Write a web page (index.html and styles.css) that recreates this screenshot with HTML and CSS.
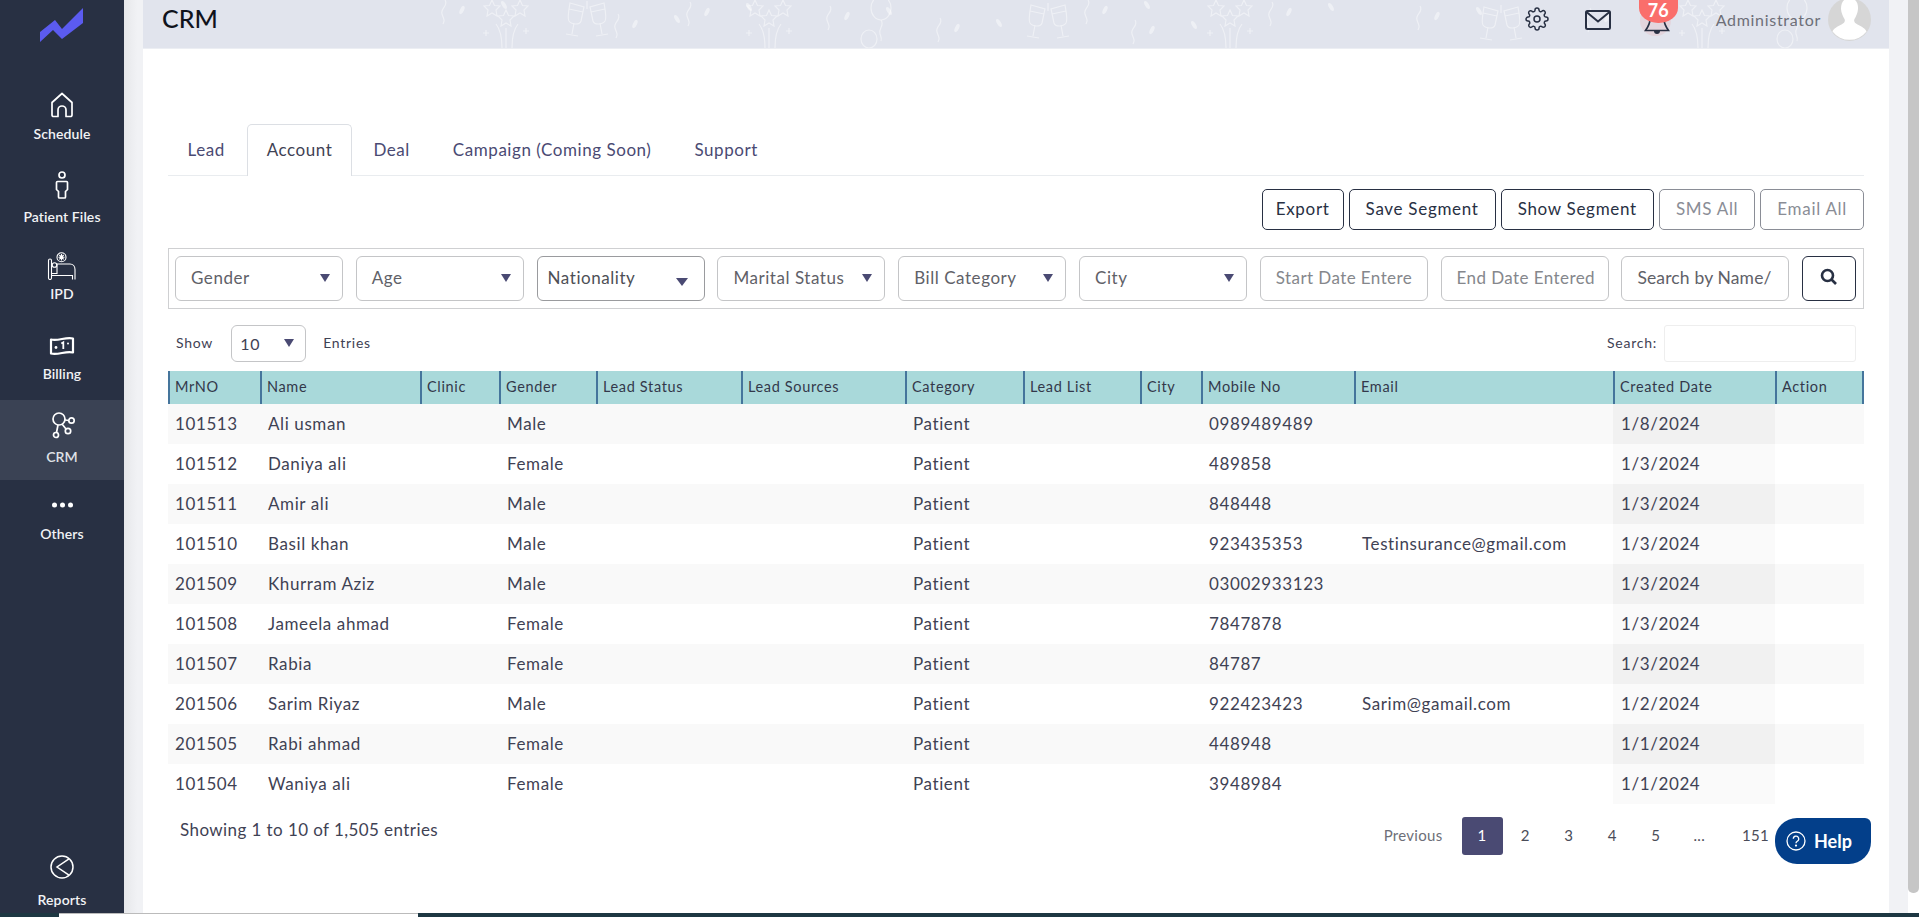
FILE: index.html
```html
<!DOCTYPE html>
<html lang="en">
<head>
<meta charset="utf-8">
<title>CRM</title>
<link rel="stylesheet" href="styles.css">
</head>
<body>
<div class="app">
  <aside class="sidebar">
    <div class="logo">
      <svg width="44" height="36" viewBox="0 0 44 36"><path d="M0 24 15 12 22 21 43 0V15L22 31 13 22 0 34Z" fill="#5b5bf0"/></svg>
    </div>
    <a class="nav"><svg class="ico" viewBox="0 0 30 30" width="30" height="30"><path d="M5 12.500 15 3.500l10 9V25a1.500 1.500 0 0 1-1.500 1.500H19V20a4 4 0 0 0-8 0v6.500H6.500A1.500 1.500 0 0 1 5 25Z" fill="none" stroke="#fff" stroke-width="1.700" stroke-linejoin="round"/></svg><span>Schedule</span></a>
    <a class="nav nav-low"><svg class="ico" viewBox="0 0 30 30" width="30" height="30"><circle cx="15" cy="5" r="3" fill="none" stroke="#fff" stroke-width="1.700"/><path d="M10.500 11.500h9a1 1 0 0 1 1 1v7l-2 2v5.500a1 1 0 0 1-1 1h-5a1 1 0 0 1-1-1v-5.500l-2-2v-7a1 1 0 0 1 1-1Z" fill="none" stroke="#fff" stroke-width="1.700"/></svg><span>Patient Files</span></a>
    <a class="nav"><svg class="ico" viewBox="0 0 30 30" width="30" height="30"><g fill="none" stroke="#fff" stroke-width="1.100"><rect x="1.500" y="9" width="3" height="20.500" rx="1.500"/><path d="M4.500 23.500H10V14h13c3 0 5 2.500 5 5.500v10M25.500 29.500v-4H4.500"/><circle cx="7.500" cy="15" r="2.300"/><circle cx="14.500" cy="7.200" r="4.500"/><path d="M14.500 4v6.400M11.500 7.200h6M12.300 5l4.400 4.400M16.700 5l-4.400 4.400"/></g></svg><span>IPD</span></a>
    <a class="nav"><svg class="ico" viewBox="0 0 30 30" width="30" height="30"><path d="M4 9.500c7 2 15-3 22-1v14c-7-2-15 3-22 1Z" fill="none" stroke="#fff" stroke-width="2.200" stroke-linejoin="round"/><circle cx="9" cy="17.500" r="1.400" fill="#fff"/><circle cx="21" cy="13.500" r="1" fill="#fff"/><path d="M14.300 13.500l2-1.200v6.700" fill="none" stroke="#fff" stroke-width="1.800"/></svg><span>Billing</span></a>
    <a class="nav nav-active nav-low"><svg class="ico" viewBox="0 0 30 30" width="30" height="30"><g fill="none" stroke="#fff" stroke-width="1.700"><circle cx="12" cy="9" r="6"/><circle cx="24.500" cy="10.500" r="2.700"/><circle cx="21" cy="21" r="2.700"/><circle cx="9" cy="25" r="2.500"/><path d="M18 10l4 .5M15 14l4 5M11 15l-1.500 7.500"/></g></svg><span>CRM</span></a>
    <a class="nav"><svg class="ico" viewBox="0 0 30 30" width="30" height="30"><g fill="#fff"><circle cx="7.500" cy="15" r="2.500"/><circle cx="15.500" cy="15" r="2.500"/><circle cx="23.500" cy="15" r="2.500"/></g></svg><span>Others</span></a>
    <a class="nav nav-end"><svg class="ico" viewBox="0 0 30 30" width="30" height="30"><g fill="none" stroke="#fff" stroke-width="1.500"><circle cx="15" cy="15" r="11"/><path d="M22 6.800 10 15l12 8.200"/></g></svg><span>Reports</span></a>
  </aside>

  <div class="gutter gutter-left"></div>

  <main class="main">
    <header class="topbar">
      <svg class="confetti" width="1746" height="48" viewBox="0 0 1746 48">
        <defs>
          <g id="stars" fill="none" stroke="#fff" stroke-opacity=".45" stroke-width="1.200">
            <path d="M8 0l2.500 5.500 5.500.5-4 4 1 6L8 13l-5 3 1-6-4-4 5.500-.5Z"/>
            <path d="M22 10l2.500 5.500 5.500.5-4 4 1 6-5-3-5 3 1-6-4-4 5.500-.5Z"/>
            <path d="M36 0l2.500 5.500 5.500.5-4 4 1 6-5-3-5 3 1-6-4-4 5.500-.5Z"/>
            <path d="M22 28v20M12 24c4 5 6 12 6 24M34 24c-4 5-6 12-6 24M2 30v6M-1 33h6M42 28v6M39 31h6"/>
          </g>
          <g id="glasses" fill="none" stroke="#fff" stroke-opacity=".45" stroke-width="1.200">
            <path d="M4 2l14 4-3 14c-1 4-9 4-12 0-2-3 0-12 1-18ZM3 8l14 3M8 22l-2 11M0 33l12 2"/>
            <path d="M38 2 24 6l3 14c1 4 9 4 12 0 2-3 0-12-1-18ZM39 8l-14 3M34 22l2 11M42 33l-12 2"/>
            <path d="M21 0v8"/>
          </g>
          <g id="bits" fill="none" stroke="#fff" stroke-opacity=".45" stroke-width="1.200">
            <path d="M7 0c4 6-5 8-3 14s3 6 1 10"/>
            <ellipse cx="24" cy="10" rx="2" ry="4.500" transform="rotate(25 24 10)" fill="#fff" fill-opacity=".45" stroke="none"/>
            <ellipse cx="66" cy="5" rx="2" ry="4.500" transform="rotate(-30 66 5)" fill="#fff" fill-opacity=".45" stroke="none"/>
          </g>
          <g id="balloons" fill="none" stroke="#fff" stroke-opacity=".45" stroke-width="1.200">
            <ellipse cx="20" cy="8" rx="10" ry="12"/><ellipse cx="8" cy="39" rx="8" ry="9"/>
            <path d="M20 20c4 6-3 8-1 14 1 3 2 4 1 7"/>
          </g>
        </defs>
        <use href="#bits" x="295" y="0"/><use href="#stars" x="341" y="0"/><use href="#glasses" x="423" y="1"/>
        <use href="#bits" x="468" y="14"/><use href="#bits" x="540" y="2"/><use href="#stars" x="604" y="0"/>
        <use href="#bits" x="680" y="6"/><use href="#balloons" x="718" y="0"/><use href="#bits" x="790" y="18"/>
        <use href="#glasses" x="884" y="3"/><use href="#bits" x="938" y="0"/><use href="#bits" x="985" y="20"/>
        <use href="#stars" x="1065" y="0"/><use href="#bits" x="1122" y="2"/><use href="#bits" x="1270" y="6"/>
        <use href="#glasses" x="1337" y="5"/><use href="#bits" x="1440" y="8"/><use href="#stars" x="1537" y="0"/><use href="#balloons" x="1634" y="0"/>
      </svg>
      <h1 class="title">CRM</h1>
      <div class="tools">
        <svg class="tool gear" width="24" height="24" viewBox="0 0 24 24" fill="none" stroke="#283043" stroke-width="1.500" stroke-linejoin="round" stroke-linecap="round"><circle cx="12" cy="12" r="3"/><path d="M19.400 15a1.650 1.650 0 0 0 .33 1.820l.06.06a2 2 0 0 1 0 2.830 2 2 0 0 1-2.830 0l-.06-.06a1.650 1.650 0 0 0-1.820-.33 1.650 1.650 0 0 0-1 1.510V21a2 2 0 0 1-2 2 2 2 0 0 1-2-2v-.09A1.650 1.650 0 0 0 9 19.400a1.650 1.650 0 0 0-1.820.33l-.06.06a2 2 0 0 1-2.830 0 2 2 0 0 1 0-2.830l.06-.06a1.650 1.650 0 0 0 .33-1.820 1.650 1.650 0 0 0-1.510-1H3a2 2 0 0 1-2-2 2 2 0 0 1 2-2h.09A1.650 1.650 0 0 0 4.600 9a1.650 1.650 0 0 0-.33-1.820l-.06-.06a2 2 0 0 1 0-2.830 2 2 0 0 1 2.830 0l.06.06a1.650 1.650 0 0 0 1.820.33H9a1.650 1.650 0 0 0 1-1.510V3a2 2 0 0 1 2-2 2 2 0 0 1 2 2v.09a1.650 1.650 0 0 0 1 1.510 1.650 1.650 0 0 0 1.820-.33l.06-.06a2 2 0 0 1 2.830 0 2 2 0 0 1 0 2.830l-.06.06a1.650 1.650 0 0 0-.33 1.820V9a1.650 1.650 0 0 0 1.510 1H21a2 2 0 0 1 2 2 2 2 0 0 1-2 2h-.09a1.650 1.650 0 0 0-1.510 1Z"/></svg>
        <svg class="tool mail" width="26" height="20" viewBox="0 0 26 20" fill="none" stroke="#283043" stroke-width="2"><rect x="1" y="1" width="24" height="18" rx="1.500"/><path d="M1.500 2 13 11.500 24.500 2"/></svg>
        <div class="bell">
          <i class="halo"></i>
          <svg width="26" height="37" viewBox="0 0 26 37"><path d="M13 10c5 0 7 5 7 9 0 4 2 8 4.500 11.500h-23C4 27 6 23 6 19c0-4 2-9 7-9Z" fill="none" stroke="#283043" stroke-width="1.700"/><path d="M10 31a3 3 0 0 0 6 0Z" fill="#283043"/></svg>
          <span class="badge">76</span>
        </div>
        <span class="user">Administrator</span>
        <span class="avatar"><svg width="43" height="43" viewBox="0 0 43 43"><circle cx="21.500" cy="21.500" r="21.500" fill="#d6d6d6"/><path d="M21.500 0c6 0 9 5 8.500 11-.3 4-2 7.500-3.500 10-1 2 0 4 3 5.500 4 2 8 4 9 7a21.500 21.500 0 0 1-34 0c1-3 5-5 9-7 3-1.500 4-3.500 3-5.500-1.500-2.500-3.200-6-3.500-10C13 5 15.500 0 21.500 0Z" fill="#fff"/></svg></span>
      </div>
    </header>

    <section class="content">
      <nav class="tabs">
        <a class="tab tab-first">Lead</a>
        <a class="tab tab-active">Account</a>
        <a class="tab">Deal</a>
        <a class="tab">Campaign (Coming Soon)</a>
        <a class="tab">Support</a>
      </nav>

      <div class="actions">
        <button class="btn btn-tight">Export</button>
        <button class="btn">Save Segment</button>
        <button class="btn">Show Segment</button>
        <button class="btn btn-muted">SMS All</button>
        <button class="btn btn-muted">Email All</button>
      </div>

      <div class="filters">
        <div class="select"><span>Gender</span><i class="caret"></i></div>
        <div class="select"><span>Age</span><i class="caret"></i></div>
        <div class="select select-tight"><span>Nationality</span><i class="caret caret-low"></i></div>
        <div class="select"><span>Marital Status</span><i class="caret"></i></div>
        <div class="select"><span>Bill Category</span><i class="caret"></i></div>
        <div class="select"><span>City</span><i class="caret"></i></div>
        <div class="select select-input"><span>Start Date Entere</span></div>
        <div class="select select-input"><span>End Date Entered</span></div>
        <div class="select select-search"><span>Search by Name/</span></div>
        <button class="btn-search"><svg width="18" height="18" viewBox="0 0 18 18" fill="none" stroke="#283043" stroke-width="2.600"><circle cx="7.500" cy="7.500" r="5.500"/><path d="M11.500 11.500 16 16"/></svg></button>
      </div>

      <div class="length">
        <div class="length-left">
          <span>Show</span>
          <div class="mini-select"><span>10</span><i class="caret"></i></div>
          <span>Entries</span>
        </div>
        <div class="length-right">
          <span>Search:</span>
          <div class="mini-input"></div>
        </div>
      </div>

      <table class="grid">
        <colgroup>
          <col class="c1"><col class="c2"><col class="c3"><col class="c4"><col class="c5"><col class="c6"><col class="c7"><col class="c8"><col class="c9"><col class="c10"><col class="c11"><col class="c12"><col class="c13">
        </colgroup>
        <thead>
          <tr><th>MrNO</th><th>Name</th><th>Clinic</th><th>Gender</th><th>Lead Status</th><th>Lead Sources</th><th>Category</th><th>Lead List</th><th>City</th><th>Mobile No</th><th>Email</th><th>Created Date</th><th class="last">Action</th></tr>
        </thead>
        <tbody>
          <tr><td>101513</td><td>Ali usman</td><td></td><td>Male</td><td></td><td></td><td>Patient</td><td></td><td></td><td>0989489489</td><td></td><td class="sorted">1/8/2024</td><td></td></tr>
          <tr><td>101512</td><td>Daniya ali</td><td></td><td>Female</td><td></td><td></td><td>Patient</td><td></td><td></td><td>489858</td><td></td><td class="sorted">1/3/2024</td><td></td></tr>
          <tr><td>101511</td><td>Amir ali</td><td></td><td>Male</td><td></td><td></td><td>Patient</td><td></td><td></td><td>848448</td><td></td><td class="sorted">1/3/2024</td><td></td></tr>
          <tr><td>101510</td><td>Basil khan</td><td></td><td>Male</td><td></td><td></td><td>Patient</td><td></td><td></td><td>923435353</td><td>Testinsurance@gmail.com</td><td class="sorted">1/3/2024</td><td></td></tr>
          <tr><td>201509</td><td>Khurram Aziz</td><td></td><td>Male</td><td></td><td></td><td>Patient</td><td></td><td></td><td>03002933123</td><td></td><td class="sorted">1/3/2024</td><td></td></tr>
          <tr><td>101508</td><td>Jameela ahmad</td><td></td><td>Female</td><td></td><td></td><td>Patient</td><td></td><td></td><td>7847878</td><td></td><td class="sorted">1/3/2024</td><td></td></tr>
          <tr><td>101507</td><td>Rabia</td><td></td><td>Female</td><td></td><td></td><td>Patient</td><td></td><td></td><td>84787</td><td></td><td class="sorted">1/3/2024</td><td></td></tr>
          <tr><td>201506</td><td>Sarim Riyaz</td><td></td><td>Male</td><td></td><td></td><td>Patient</td><td></td><td></td><td>922423423</td><td>Sarim@gamail.com</td><td class="sorted">1/2/2024</td><td></td></tr>
          <tr><td>201505</td><td>Rabi ahmad</td><td></td><td>Female</td><td></td><td></td><td>Patient</td><td></td><td></td><td>448948</td><td></td><td class="sorted">1/1/2024</td><td></td></tr>
          <tr><td>101504</td><td>Waniya ali</td><td></td><td>Female</td><td></td><td></td><td>Patient</td><td></td><td></td><td>3948984</td><td></td><td class="sorted">1/1/2024</td><td></td></tr>
        </tbody>
      </table>

      <div class="foot">
        <div class="info">Showing 1 to 10 of 1,505 entries</div>
        <div class="pager">
          <a class="pg pg-prev">Previous</a>
          <a class="pg pg-on">1</a>
          <a class="pg">2</a>
          <a class="pg">3</a>
          <a class="pg">4</a>
          <a class="pg">5</a>
          <a class="pg">...</a>
          <a class="pg pg-last">151</a>
        </div>
      </div>
      <button class="help"><svg width="20" height="20" viewBox="0 0 20 20" fill="none" stroke="#fff" stroke-width="1.300"><circle cx="10" cy="10" r="9"/><path d="M7.300 7.800a2.700 2.700 0 1 1 4 2.400c-.9.500-1.300 1-1.300 2"/><circle cx="10" cy="14.600" r=".5" fill="#fff"/></svg><span>Help</span></button>
    </section>
  </main>

  <div class="gutter gutter-right"></div>
  <div class="scrollbar"><div class="thumb"></div></div>
  <div class="taskstrip"><div class="taskstrip-white"></div></div>
</div>
</body>
</html>
```
FILE: styles.css
```css
* { box-sizing: border-box; }
html, body { margin: 0; height: 100%; overflow: hidden; }
body { font-family: "Lato", "Noto Sans", sans-serif; color: #3f4254; background: #fff; }

.app {
  display: grid;
  grid-template-columns: 124px 19px 1746px 19px 11px;
  grid-template-rows: 913px 4px;
  width: 1919px;
  height: 917px;
}

.sidebar {
  background: #283043;
  display: flex;
  flex-direction: column;
  color: #fff;
}
.logo { height: 80px; padding: 8px 0 0 40px; }
.nav {
  height: 80px;
  padding-top: 10px;
  display: flex;
  flex-direction: column;
  align-items: center;
  font-size: 14px;
  font-weight: 600;
  letter-spacing: .1px;
  color: #f2f3f5;
}
.nav span { display: block; margin-top: 4px; line-height: 20px; }
.nav-low span { margin-top: 7px; }
.nav-active { background: #3a4254; color: #dfe1e6; }
.nav-end { margin-top: auto; height: 73px; padding-top: 12px; }
.nav-end span { margin-top: 8px; }

.gutter { background: #f1f2f5; }
.gutter-left { background: linear-gradient(90deg, #e6e7ea, #f1f2f5 70%); }

.main { display: flex; flex-direction: column; background: #fff; min-width: 0; }

.topbar {
  position: relative;
  flex: none;
  height: 48px;
  background: #e1e4ed;
  display: flex;
  align-items: flex-start;
  justify-content: space-between;
  overflow: hidden;
  box-shadow: 0 1px 0 #eceef3;
}
.confetti { position: absolute; left: 0; top: 0; }
.title {
  position: relative;
  margin: 2px 0 0 19px;
  font-size: 25px;
  line-height: 32px;
  font-weight: 500;
  color: #10131c;
}
.tools { position: relative; display: flex; align-items: flex-start; padding-right: 18px; }
.tool { display: block; }
.gear { margin: 7px 0 0 0; }
.mail { margin: 10px 0 0 36px; }
.bell { position: relative; width: 39px; height: 38px; margin: 0 0 0 28px; }
.bell svg { position: absolute; left: 5px; top: 0; }
.halo { position: absolute; left: 1px; top: 5px; width: 31px; height: 31px; border-radius: 50%; background: rgba(250, 110, 107, .12); }
.badge {
  position: absolute;
  left: 0; top: 0;
  width: 39px;
  height: 23px;
  border-radius: 0 0 19px 19px / 0 0 15px 15px;
  background: #fa6e6b;
  color: #fff;
  font-size: 18px;
  font-weight: 700;
  line-height: 21px;
  text-align: center;
}
.user { margin: 9px 7px 0 38px; font-size: 16px; line-height: 22px; color: #6d6f78; letter-spacing: .7px; }
.avatar { display: block; width: 43px; height: 41px; overflow: hidden; }
.avatar svg { display: block; margin-top: -2px; }

.content {
  position: relative;
  flex: 1;
  padding: 75px 25px 0;
}

.tabs { display: flex; height: 53px; border-bottom: 1px solid #e9ecef; }
.tab {
  display: flex;
  align-items: center;
  height: 52px;
  padding: 0 20.500px;
  font-size: 17px;
  letter-spacing: .55px;
  color: #4a4a73;
  border: 1px solid transparent;
  border-bottom: 0;
}
.tab-first { padding-left: 18.500px; padding-right: 21.500px; }
.tab-active {
  color: #3f4254;
  background: #fff;
  border-color: #dcdfe4;
  border-radius: 5px 5px 0 0;
  margin-top: 1px;
  padding: 0 18.500px 2px;
}

.actions { display: flex; justify-content: flex-end; gap: 5px; margin-top: 13px; height: 41px; }
.btn {
  font: inherit;
  font-size: 17px;
  letter-spacing: .7px;
  height: 41px;
  padding: 0 16px 2px;
  border: 1px solid #283043;
  border-radius: 5px;
  background: #fff;
  color: #283043;
}
.btn-tight { padding-left: 13px; padding-right: 13px; }
.btn-muted { border-color: #8a8d96; color: #8a8d96; }

.filters {
  display: flex;
  gap: 12.800px;
  margin-top: 18px;
  height: 61px;
  padding: 7px 0 0 6px;
  border: 1px solid #cfd0d2;
}
.select {
  position: relative;
  display: flex;
  align-items: center;
  flex: none;
  width: 168px;
  height: 45px;
  padding: 0 15px 2px;
  border: 1px solid #c4c5c7;
  border-radius: 6px;
  font-size: 17px;
  letter-spacing: .55px;
  color: #5f6168;
  white-space: nowrap;
  overflow: hidden;
}
.select-tight { padding-left: 10px; border-color: #9a9b9e; color: #4d4f56; }
.select-input { color: #85878c; letter-spacing: .42px; }
.select-search { color: #5f6168; font-size: 17.500px; letter-spacing: .15px; }
.caret {
  position: absolute;
  right: 12px;
  top: 17px;
  width: 0;
  height: 0;
  border-left: 5px solid transparent;
  border-right: 5px solid transparent;
  border-top: 8px solid #4a4a73;
}
.caret-low { top: 21px; right: 16px; border-left-width: 6px; border-right-width: 6px; }
.btn-search {
  display: flex;
  align-items: flex-start;
  justify-content: center;
  flex: none;
  width: 54px;
  height: 45px;
  padding: 11px 0 0;
  border: 1px solid #283043;
  border-radius: 6px;
  background: #fff;
}

.length {
  display: flex;
  justify-content: space-between;
  margin-top: 16px;
  height: 37px;
  padding: 0 8px;
  font-size: 14px;
  letter-spacing: .75px;
  color: #3f4254;
}
.length-left, .length-right { display: flex; align-items: center; }
.length-left > span, .length-right > span { position: relative; top: -1px; }
.mini-select {
  position: relative;
  display: flex;
  align-items: center;
  width: 75px;
  height: 37px;
  margin: 0 17px 0 18px;
  padding-left: 8px;
  border: 1px solid #c4c5c7;
  border-radius: 6px;
  font-size: 16px;
}
.mini-select .caret { top: 13px; right: 11px; border-left-width: 5.500px; border-right-width: 5.500px; }
.mini-input { width: 192px; height: 37px; margin-left: 7px; border: 1px solid #eeeeee; border-radius: 3px; }

.grid {
  width: 1696px;
  margin-top: 9px;
  border-collapse: separate;
  border-spacing: 0;
  table-layout: fixed;
}
.c1 { width: 92px; } .c2 { width: 160px; } .c3 { width: 79px; } .c4 { width: 97px; }
.c5 { width: 145px; } .c6 { width: 164px; } .c7 { width: 118px; } .c8 { width: 117px; }
.c9 { width: 61px; } .c10 { width: 153px; } .c11 { width: 259px; } .c12 { width: 162px; } .c13 { width: 89px; }
.grid th {
  height: 33px;
  padding: 0 5px 2px;
  text-align: left;
  font-size: 14.500px;
  font-weight: 400;
  letter-spacing: .65px;
  color: #33384a;
  background: #a9d9da;
  border-left: 2px solid #45759c;
}
.grid th.last { border-right: 2px solid #45759c; }
.grid td {
  height: 40px;
  padding: 0 8px 2px;
  font-size: 17px;
  letter-spacing: .6px;
  color: #3f4254;
  white-space: nowrap;
}
.grid td:first-child { padding-left: 7px; }
.grid tbody tr:nth-child(odd) td { background: #f9f9f9; }
.grid tbody tr:nth-child(even) td.sorted { background: #fafafa; }
.grid tbody tr:nth-child(odd) td.sorted { background: #f1f1f1; }

.foot { display: flex; justify-content: space-between; margin-top: 13px; }
.info { padding: 2px 0 0 12px; font-size: 17px; letter-spacing: .42px; line-height: 22px; color: #3f4254; }
.pager { display: flex; align-items: center; height: 38px; padding-right: 95px; font-size: 15px; letter-spacing: .3px; color: #4a4c58; }
.pg { display: flex; align-items: center; justify-content: center; width: 43.500px; height: 38px; padding-bottom: 2px; }
.pg-prev { width: auto; margin-right: 19px; color: #6d6f78; }
.pg-on { width: 41px; margin-right: 1px; background: #4a4a73; color: #fff; border-radius: 3px; }
.pg-last { width: auto; margin-left: 21px; }

.help {
  position: absolute;
  left: 1632px;
  top: 770px;
  display: flex;
  align-items: center;
  gap: 8px;
  width: 96px;
  height: 46px;
  padding: 0 0 0 11px;
  border: 0;
  border-radius: 22px 6px 22px 22px;
  background: #033f8a;
  color: #fff;
  font: 700 18px "Lato", sans-serif;
}

.scrollbar { background: #fff; }
.thumb { height: 893px; background: #c6c6c6; border-radius: 0 0 5px 5px; }
.taskstrip { grid-column: 1 / -1; position: relative; background: #1d3742; }
.taskstrip-white { position: absolute; left: 59px; top: 0; width: 359px; height: 4px; background: #fff; border-top: 1px solid #bbb; }
```
